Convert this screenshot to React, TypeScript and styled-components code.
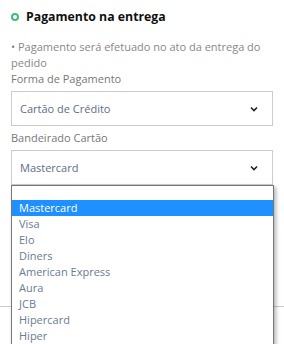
import React from 'react';
import styled, { createGlobalStyle } from 'styled-components';

const GlobalStyle = createGlobalStyle`
    html, body {
        margin: 0;
        padding: 0;
        background: #fff;
        font-family: "Open Sans", "Liberation Sans", sans-serif;
    }
`;

const Page = styled.div`
    width: 284px;
    height: 344px;
    overflow: hidden;
    position: relative;
`;

const Section = styled.div`
    padding: 8px 11px 0 11px;
`;

const Header = styled.div`
    display: flex;
    align-items: center;
    gap: 7px;
    height: 18px;
`;

const Dot = styled.span`
    width: 8px;
    height: 8px;
    border-radius: 50%;
    box-sizing: border-box;
    border: 2.5px solid #3dbf7a;
    flex: none;
`;

const Title = styled.h2`
    margin: 0;
    font-size: 12.3px;
    font-weight: 700;
    color: #111;
    line-height: 18px;
`;

const Note = styled.p`
    margin: 13px 0 0 0;
    font-size: 11px;
    line-height: 16px;
    color: #888;
`;

const Label = styled.div<{ $top: number }>`
    margin-top: ${(p) => p.$top}px;
    font-size: 11px;
    line-height: 16px;
    color: #777;
`;

const SelectWrap = styled.div`
    position: relative;
    margin-top: 4px;
`;

const SelectBox = styled.div`
    height: 35px;
    box-sizing: border-box;
    border: 1px solid #ccc;
    display: flex;
    align-items: center;
    justify-content: space-between;
    padding: 0 14px 0 8px;
    font-size: 11px;
    color: #5d6d88;
`;

const Chevron = () => (
    <svg width="8" height="6" viewBox="0 0 8 6">
        <path d="M1 1.5 L4 4.5 L7 1.5" fill="none" stroke="#222" strokeWidth="1.6" />
    </svg>
);

const Popup = styled.div`
    position: absolute;
    top: 100%;
    left: 0;
    right: -1px;
    background: #fff;
    border: 1px solid #777;
    box-shadow: 2px 2px 4px rgba(0, 0, 0, 0.3);
    z-index: 2;
    padding-top: 14px;
`;

const Option = styled.div<{ $active?: boolean }>`
    height: 16px;
    line-height: 16px;
    font-size: 11px;
    padding-left: 7px;
    color: ${(p) => (p.$active ? '#fff' : '#6b7b93')};
    background: ${(p) => (p.$active ? '#1e90ff' : 'transparent')};
`;

const Divider = styled.div`
    position: absolute;
    left: 0;
    right: 0;
    top: 306px;
    border-top: 1px solid #ccc;
`;

const brands = ['Mastercard', 'Visa', 'Elo', 'Diners', 'American Express', 'Aura', 'JCB', 'Hipercard', 'Hiper'];

export default function App() {
    return (
        <Page>
            <GlobalStyle />
            <Divider />
            <Section>
                <Header>
                    <Dot />
                    <Title>Pagamento na entrega</Title>
                </Header>
                <Note>• Pagamento será efetuado no ato da entrega do pedido</Note>
                <Label $top={0}>Forma de Pagamento</Label>
                <SelectWrap>
                    <SelectBox>
                        Cartão de Crédito
                        <Chevron />
                    </SelectBox>
                </SelectWrap>
                <Label $top={4}>Bandeirado Cartão</Label>
                <SelectWrap>
                    <SelectBox>
                        Mastercard
                        <Chevron />
                    </SelectBox>
                    <Popup>
                        {brands.map((b, i) => (
                            <Option key={b} $active={i === 0}>{b}</Option>
                        ))}
                    </Popup>
                </SelectWrap>
            </Section>
        </Page>
    );
}
